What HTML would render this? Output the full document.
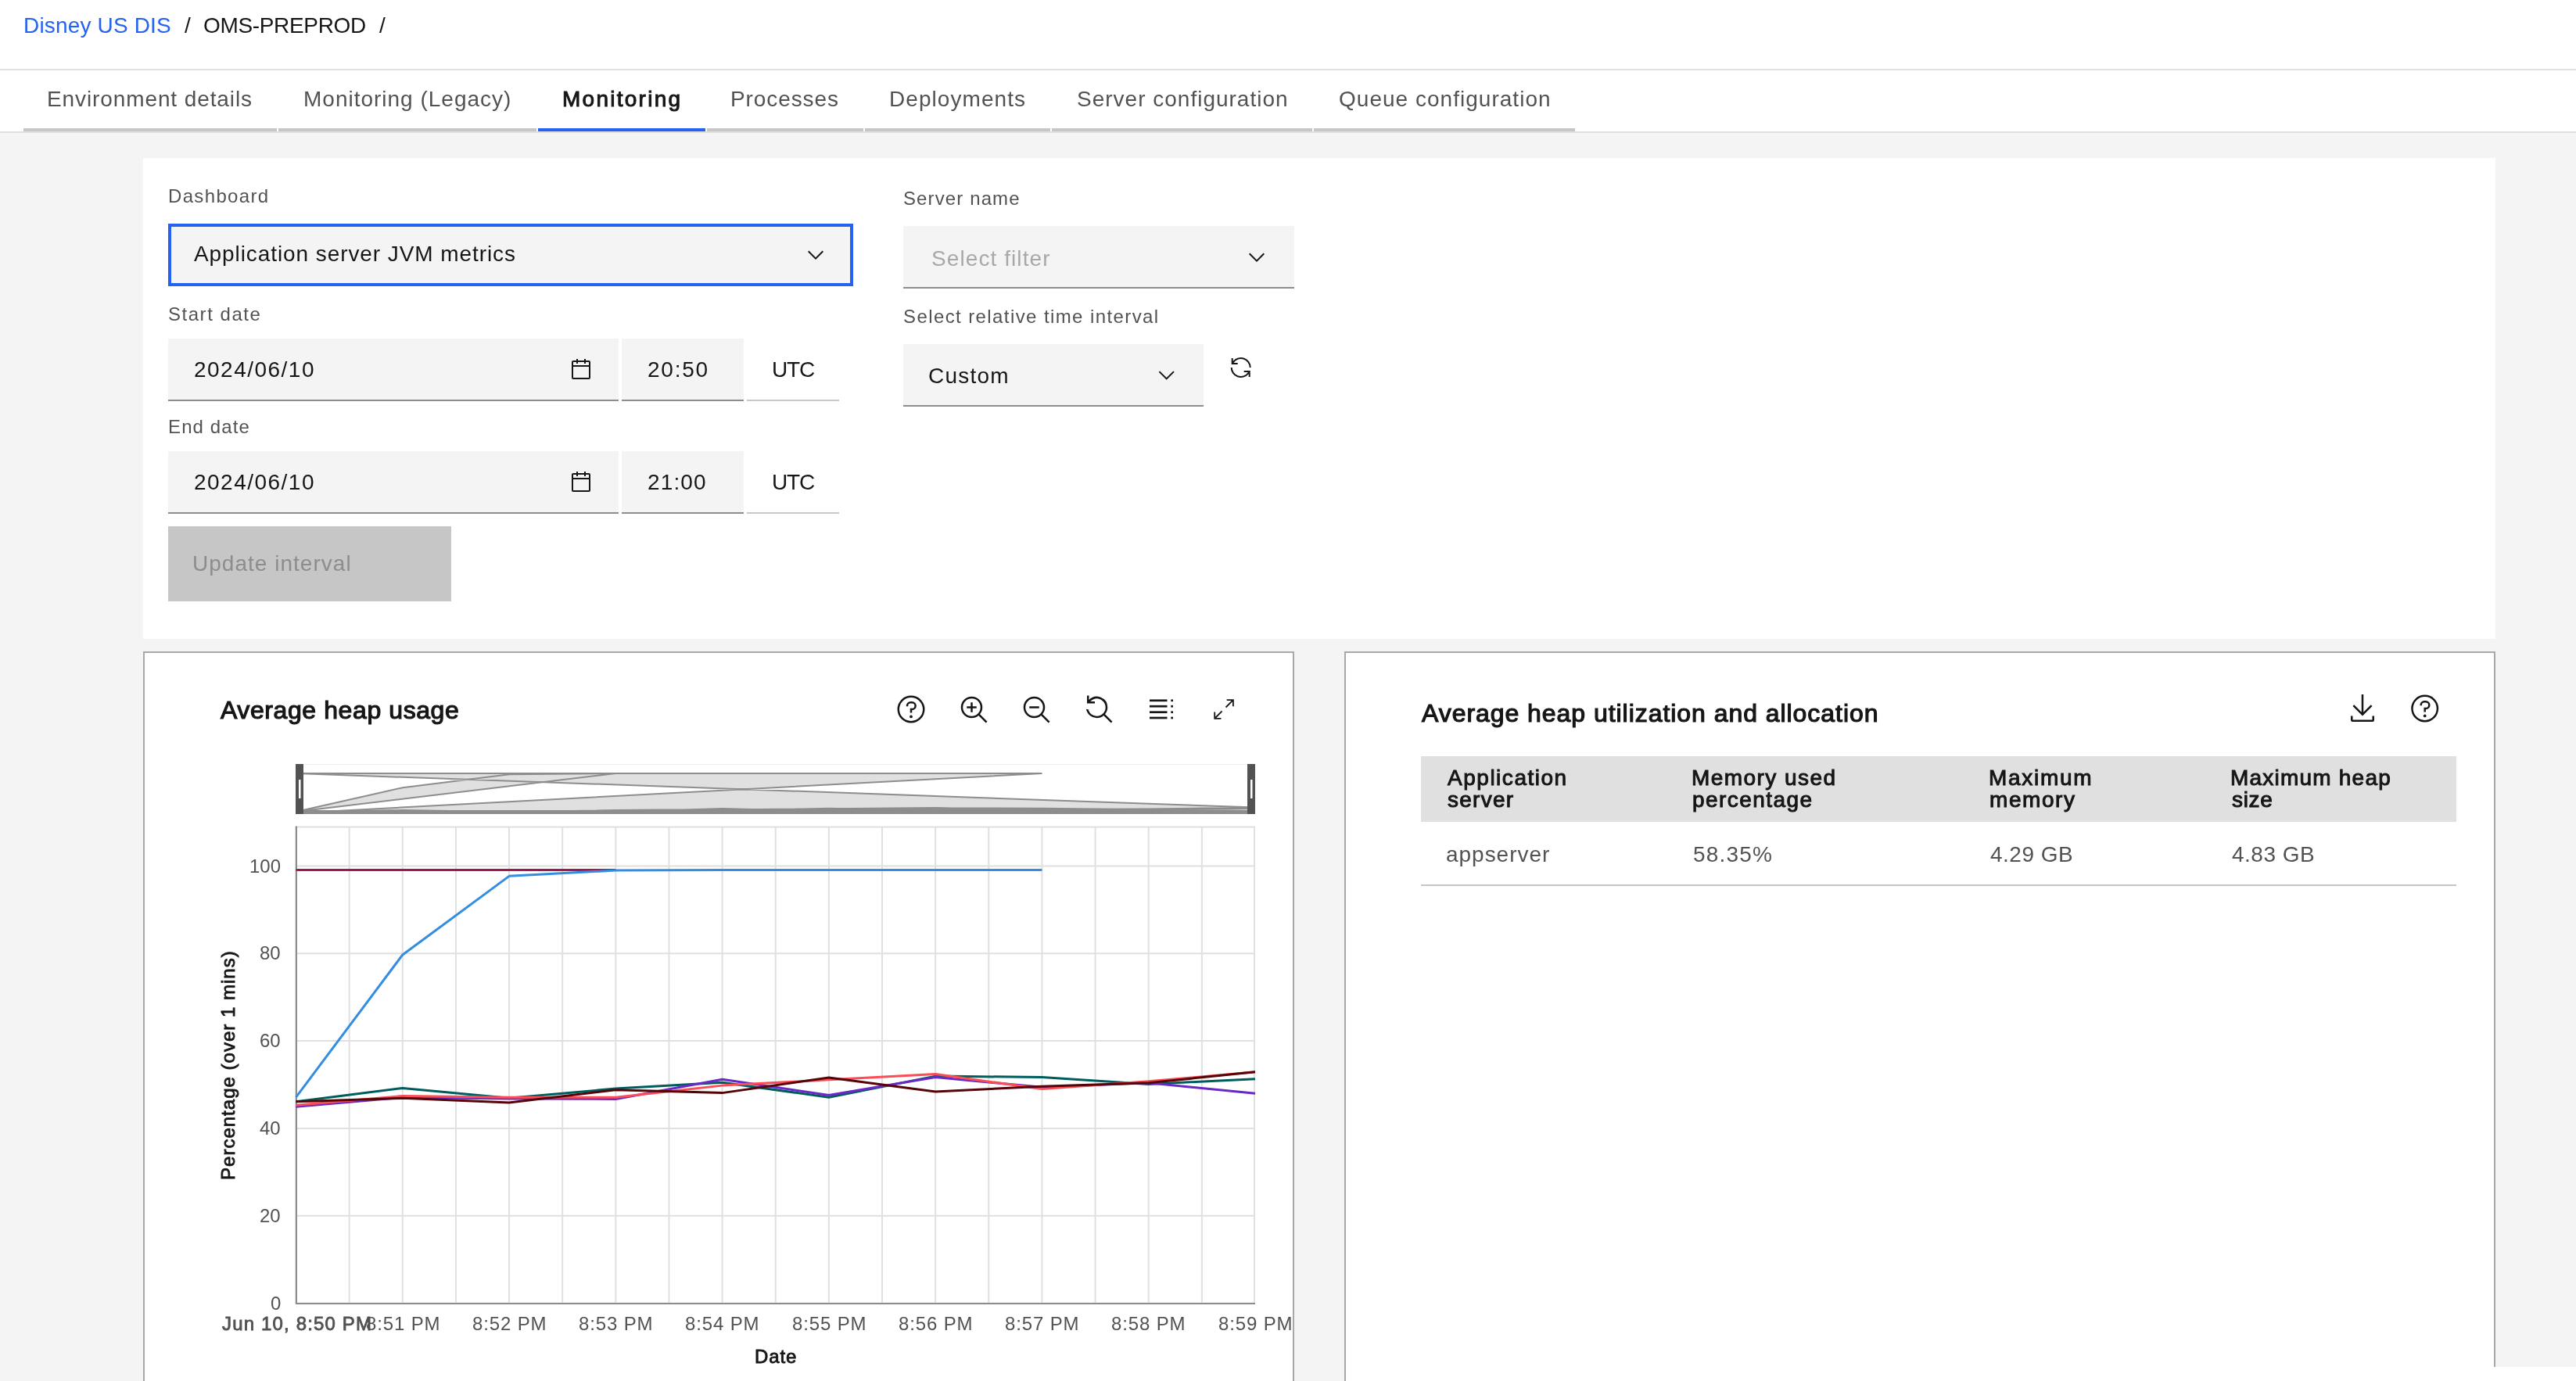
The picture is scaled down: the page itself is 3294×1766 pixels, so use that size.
<!DOCTYPE html>
<html><head><meta charset="utf-8">
<style>
html,body{margin:0;padding:0;}
body{width:3294px;height:1766px;overflow:hidden;position:relative;background:#f4f4f4;font-family:"Liberation Sans",sans-serif;}
.r{position:absolute;}
.t{position:absolute;white-space:nowrap;line-height:1;-webkit-font-smoothing:antialiased;will-change:transform;}
.ov{position:absolute;left:0;top:0;}
</style></head><body>
<div class="r" style="left:0px;top:0px;width:3294px;height:170px;background:#ffffff;"></div>
<div class="r" style="left:0px;top:88px;width:3294px;height:2px;background:#e0e0e0;"></div>
<div class="r" style="left:0px;top:168px;width:3294px;height:2px;background:#e0e0e0;"></div>
<div class="r" style="left:30px;top:164px;width:324px;height:4px;background:#c6c6c6;"></div>
<div class="r" style="left:356px;top:164px;width:330px;height:4px;background:#c6c6c6;"></div>
<div class="r" style="left:688px;top:164px;width:214px;height:4px;background:#2562f2;"></div>
<div class="r" style="left:904px;top:164px;width:200px;height:4px;background:#c6c6c6;"></div>
<div class="r" style="left:1106px;top:164px;width:237px;height:4px;background:#c6c6c6;"></div>
<div class="r" style="left:1345px;top:164px;width:333px;height:4px;background:#c6c6c6;"></div>
<div class="r" style="left:1680px;top:164px;width:334px;height:4px;background:#c6c6c6;"></div>
<div class="r" style="left:183px;top:202px;width:3008px;height:615px;background:#ffffff;"></div>
<div class="r" style="left:215px;top:286px;width:876px;height:80px;background:#f4f4f4;box-shadow:inset 0 0 0 4px #2562f2;"></div>
<div class="r" style="left:215px;top:433px;width:576px;height:80px;background:#f4f4f4;border-bottom:2px solid #8d8d8d;box-sizing:border-box;"></div>
<div class="r" style="left:795px;top:433px;width:156px;height:80px;background:#f4f4f4;border-bottom:2px solid #8d8d8d;box-sizing:border-box;"></div>
<div class="r" style="left:955px;top:511px;width:118px;height:2px;background:#c6c6c6;"></div>
<div class="r" style="left:215px;top:577px;width:576px;height:80px;background:#f4f4f4;border-bottom:2px solid #8d8d8d;box-sizing:border-box;"></div>
<div class="r" style="left:795px;top:577px;width:156px;height:80px;background:#f4f4f4;border-bottom:2px solid #8d8d8d;box-sizing:border-box;"></div>
<div class="r" style="left:955px;top:655px;width:118px;height:2px;background:#c6c6c6;"></div>
<div class="r" style="left:215px;top:673px;width:362px;height:96px;background:#c6c6c6;"></div>
<div class="r" style="left:1155px;top:289px;width:500px;height:80px;background:#f4f4f4;border-bottom:2px solid #8d8d8d;box-sizing:border-box;"></div>
<div class="r" style="left:1155px;top:440px;width:384px;height:80px;background:#f4f4f4;border-bottom:2px solid #8d8d8d;box-sizing:border-box;"></div>
<div class="r" style="left:183px;top:833px;width:1472px;height:967px;background:#ffffff;border:2px solid #a8a8a8;box-sizing:border-box;"></div>
<div class="r" style="left:1719px;top:833px;width:1472px;height:967px;background:#ffffff;border:2px solid #a8a8a8;box-sizing:border-box;"></div>
<div class="r" style="left:1817px;top:967px;width:1324px;height:84px;background:#e0e0e0;"></div>
<div class="r" style="left:1817px;top:1131px;width:1324px;height:2px;background:#c6c6c6;"></div>
<div class="r" style="left:3189px;top:1748px;width:105px;height:18px;background:#ffffff;"></div>
<svg class="ov" width="3294" height="1766" viewBox="0 0 3294 1766"><rect x="378" y="1057.5" width="1226" height="609" fill="none" stroke="#e0e0e0" stroke-width="2"/><line x1="446.64" y1="1057.5" x2="446.64" y2="1666.5" stroke="#e0e0e0" stroke-width="2"/><line x1="514.78" y1="1057.5" x2="514.78" y2="1666.5" stroke="#e0e0e0" stroke-width="2"/><line x1="582.92" y1="1057.5" x2="582.92" y2="1666.5" stroke="#e0e0e0" stroke-width="2"/><line x1="651.06" y1="1057.5" x2="651.06" y2="1666.5" stroke="#e0e0e0" stroke-width="2"/><line x1="719.19" y1="1057.5" x2="719.19" y2="1666.5" stroke="#e0e0e0" stroke-width="2"/><line x1="787.33" y1="1057.5" x2="787.33" y2="1666.5" stroke="#e0e0e0" stroke-width="2"/><line x1="855.47" y1="1057.5" x2="855.47" y2="1666.5" stroke="#e0e0e0" stroke-width="2"/><line x1="923.61" y1="1057.5" x2="923.61" y2="1666.5" stroke="#e0e0e0" stroke-width="2"/><line x1="991.75" y1="1057.5" x2="991.75" y2="1666.5" stroke="#e0e0e0" stroke-width="2"/><line x1="1059.89" y1="1057.5" x2="1059.89" y2="1666.5" stroke="#e0e0e0" stroke-width="2"/><line x1="1128.03" y1="1057.5" x2="1128.03" y2="1666.5" stroke="#e0e0e0" stroke-width="2"/><line x1="1196.17" y1="1057.5" x2="1196.17" y2="1666.5" stroke="#e0e0e0" stroke-width="2"/><line x1="1264.31" y1="1057.5" x2="1264.31" y2="1666.5" stroke="#e0e0e0" stroke-width="2"/><line x1="1332.44" y1="1057.5" x2="1332.44" y2="1666.5" stroke="#e0e0e0" stroke-width="2"/><line x1="1400.58" y1="1057.5" x2="1400.58" y2="1666.5" stroke="#e0e0e0" stroke-width="2"/><line x1="1468.72" y1="1057.5" x2="1468.72" y2="1666.5" stroke="#e0e0e0" stroke-width="2"/><line x1="1536.86" y1="1057.5" x2="1536.86" y2="1666.5" stroke="#e0e0e0" stroke-width="2"/><line x1="378" y1="1554.70" x2="1605" y2="1554.70" stroke="#e0e0e0" stroke-width="2"/><line x1="378" y1="1442.90" x2="1605" y2="1442.90" stroke="#e0e0e0" stroke-width="2"/><line x1="378" y1="1331.10" x2="1605" y2="1331.10" stroke="#e0e0e0" stroke-width="2"/><line x1="378" y1="1219.30" x2="1605" y2="1219.30" stroke="#e0e0e0" stroke-width="2"/><line x1="378" y1="1107.50" x2="1605" y2="1107.50" stroke="#e0e0e0" stroke-width="2"/><line x1="379" y1="1056.5" x2="379" y2="1668" stroke="#8d8d8d" stroke-width="2"/><line x1="378" y1="1667" x2="1605" y2="1667" stroke="#8d8d8d" stroke-width="2"/><polyline points="378.50,1112.53 514.78,1112.53 651.06,1112.53 787.33,1112.53" fill="none" stroke="#9f1853" stroke-width="3" stroke-linejoin="round"/><polyline points="378.50,1403.21 514.78,1220.98 651.06,1120.36 787.33,1113.09 923.61,1112.53 1059.89,1112.53 1196.17,1112.53 1332.44,1112.53" fill="none" stroke="#338de2" stroke-width="3" stroke-linejoin="round"/><polyline points="378.50,1408.80 514.78,1391.47 651.06,1404.33 787.33,1392.03 923.61,1384.20 1059.89,1403.21 1196.17,1376.10 1332.44,1377.50 1468.72,1386.44 1605.00,1379.73" fill="none" stroke="#005d5d" stroke-width="3" stroke-linejoin="round"/><polyline points="378.50,1415.23 514.78,1403.21 651.06,1404.89 787.33,1405.45 923.61,1380.29 1059.89,1400.42 1196.17,1377.50 1332.44,1390.35 1468.72,1384.76 1605.00,1398.18" fill="none" stroke="#6929c4" stroke-width="3" stroke-linejoin="round"/><polyline points="378.50,1413.27 514.78,1401.53 651.06,1403.21 787.33,1403.21 923.61,1388.12 1059.89,1380.85 1196.17,1373.58 1332.44,1392.59 1468.72,1382.81 1605.00,1370.79" fill="none" stroke="#fa4d56" stroke-width="3" stroke-linejoin="round"/><polyline points="378.50,1408.80 514.78,1404.33 651.06,1409.92 787.33,1393.71 923.61,1397.62 1059.89,1378.06 1196.17,1395.94 1332.44,1389.24 1468.72,1384.76 1605.00,1370.79" fill="none" stroke="#570408" stroke-width="3" stroke-linejoin="round"/><rect x="378" y="977" width="1227" height="64" fill="#ffffff"/><line x1="378" y1="977.5" x2="1605" y2="977.5" stroke="#f0f0f0" stroke-width="1"/><path d="M378.50,1040.00 L514.78,1037.98 L651.06,1038.26 L787.33,1038.35 L923.61,1034.11 L1059.89,1037.50 L1196.17,1033.64 L1332.44,1035.81 L1468.72,1034.87 L1605.00,1037.13 L378.50,1038.92 L514.78,1036.00 L651.06,1038.16 L787.33,1036.09 L923.61,1034.77 L1059.89,1037.98 L1196.17,1033.41 L1332.44,1033.64 L1468.72,1035.15 L1605.00,1034.02 L378.50,1038.92 L514.78,1038.16 L651.06,1039.11 L787.33,1036.37 L923.61,1037.03 L1059.89,1033.74 L1196.17,1036.75 L1332.44,1035.62 L1468.72,1034.87 L1605.00,1032.51 L378.50,989.00 L514.78,989.00 L651.06,989.00 L787.33,989.00 L378.50,1037.98 L514.78,1007.27 L651.06,990.32 L787.33,989.09 L923.61,989.00 L1059.89,989.00 L1196.17,989.00 L1332.44,989.00 L378.50,1039.67 L514.78,1037.69 L651.06,1037.98 L787.33,1037.98 L923.61,1035.43 L1059.89,1034.21 L1196.17,1032.98 L1332.44,1036.19 L1468.72,1034.54 L1605.00,1032.51 L1605.00,1040.00 L1468.72,1040.00 L1332.44,1040.00 L1196.17,1040.00 L1059.89,1040.00 L923.61,1040.00 L787.33,1040.00 L651.06,1040.00 L514.78,1040.00 L378.50,1040.00 L1332.44,1040.00 L1196.17,1040.00 L1059.89,1040.00 L923.61,1040.00 L787.33,1040.00 L651.06,1040.00 L514.78,1040.00 L378.50,1040.00 L787.33,1040.00 L651.06,1040.00 L514.78,1040.00 L378.50,1040.00 L1605.00,1040.00 L1468.72,1040.00 L1332.44,1040.00 L1196.17,1040.00 L1059.89,1040.00 L923.61,1040.00 L787.33,1040.00 L651.06,1040.00 L514.78,1040.00 L378.50,1040.00 L1605.00,1040.00 L1468.72,1040.00 L1332.44,1040.00 L1196.17,1040.00 L1059.89,1040.00 L923.61,1040.00 L787.33,1040.00 L651.06,1040.00 L514.78,1040.00 L378.50,1040.00 L1605.00,1040.00 L1468.72,1040.00 L1332.44,1040.00 L1196.17,1040.00 L1059.89,1040.00 L923.61,1040.00 L787.33,1040.00 L651.06,1040.00 L514.78,1040.00 L378.50,1040.00 Z" fill="#e0e0e0" fill-rule="nonzero"/><path d="M378.50,1040.00 L514.78,1037.98 L651.06,1038.26 L787.33,1038.35 L923.61,1034.11 L1059.89,1037.50 L1196.17,1033.64 L1332.44,1035.81 L1468.72,1034.87 L1605.00,1037.13 L378.50,1038.92 L514.78,1036.00 L651.06,1038.16 L787.33,1036.09 L923.61,1034.77 L1059.89,1037.98 L1196.17,1033.41 L1332.44,1033.64 L1468.72,1035.15 L1605.00,1034.02 L378.50,1038.92 L514.78,1038.16 L651.06,1039.11 L787.33,1036.37 L923.61,1037.03 L1059.89,1033.74 L1196.17,1036.75 L1332.44,1035.62 L1468.72,1034.87 L1605.00,1032.51 L378.50,989.00 L514.78,989.00 L651.06,989.00 L787.33,989.00 L378.50,1037.98 L514.78,1007.27 L651.06,990.32 L787.33,989.09 L923.61,989.00 L1059.89,989.00 L1196.17,989.00 L1332.44,989.00 L378.50,1039.67 L514.78,1037.69 L651.06,1037.98 L787.33,1037.98 L923.61,1035.43 L1059.89,1034.21 L1196.17,1032.98 L1332.44,1036.19 L1468.72,1034.54 L1605.00,1032.51" fill="none" stroke="#8d8d8d" stroke-width="2"/><rect x="378" y="1036" width="1227" height="5" fill="#8d8d8d"/><rect x="378" y="977" width="10" height="64" fill="#525252"/><rect x="382" y="997" width="2.5" height="24" fill="#ffffff"/><rect x="1595" y="977" width="10" height="64" fill="#525252"/><rect x="1599" y="997" width="2.5" height="24" fill="#ffffff"/><g transform="translate(1145,887) scale(1.25)" fill="#161616"><path d="M16,2A14,14,0,1,0,30,16,14,14,0,0,0,16,2Zm0,26A12,12,0,1,1,28,16,12,12,0,0,1,16,28Z"/><circle cx="16" cy="23.5" r="1.5"/><path d="M17,8H15.5A4.49,4.49,0,0,0,11,12.5V13h2v-.5A2.5,2.5,0,0,1,15.5,10H17a2.5,2.5,0,0,1,0,5H15v4.5h2V17a4.5,4.5,0,0,0,0-9Z"/></g><g transform="translate(1225,887) scale(1.25)" fill="#161616"><polygon points="19 13 15 13 15 9 13 9 13 13 9 13 9 15 13 15 13 19 15 19 15 15 19 15 19 13"/><path d="M22.45,21A10.87,10.87,0,0,0,25,14,11,11,0,1,0,14,25a10.87,10.87,0,0,0,7-2.55L28.59,30,30,28.59ZM14,23a9,9,0,1,1,9-9A9,9,0,0,1,14,23Z"/></g><g transform="translate(1305,887) scale(1.25)" fill="#161616"><rect x="9" y="13" width="10" height="2"/><path d="M22.45,21A10.87,10.87,0,0,0,25,14,11,11,0,1,0,14,25a10.87,10.87,0,0,0,7-2.55L28.59,30,30,28.59ZM14,23a9,9,0,1,1,9-9A9,9,0,0,1,14,23Z"/></g><g transform="translate(1385,887) scale(1.25)" fill="#161616"><path d="M22.4478,21A10.855,10.855,0,0,0,25,14,10.99,10.99,0,0,0,6,6.4658V2H4v8h8V8H7.332a8.9768,8.9768,0,1,1-2.1,8H3.1912A11.0118,11.0118,0,0,0,14,25a10.8046,10.8046,0,0,0,7-2.5522L28.5859,30,30,28.5859Z"/></g><rect x="1470" y="894.45" width="22.5" height="2.7" fill="#161616"/><rect x="1497.3" y="894.45" width="2.7" height="2.7" fill="#161616"/><rect x="1470" y="901.85" width="22.5" height="2.7" fill="#161616"/><rect x="1497.3" y="901.85" width="2.7" height="2.7" fill="#161616"/><rect x="1470" y="909.35" width="22.5" height="2.7" fill="#161616"/><rect x="1497.3" y="909.35" width="2.7" height="2.7" fill="#161616"/><rect x="1470" y="916.65" width="22.5" height="2.7" fill="#161616"/><rect x="1497.3" y="916.65" width="2.7" height="2.7" fill="#161616"/><g transform="translate(1550.5,892.4) scale(1.82)" fill="#161616"><path d="M10 1v1h3.3L9 6.3l.7.7L14 2.7V6h1V1zM7 9.7L6.3 9 2 13.3V10H1v5h5v-1H2.7z"/></g><g transform="translate(3001,885.5) scale(1.25)" fill="#161616"><path d="M26 24v4H6v-4H4v4a2 2 0 002 2h20a2 2 0 002-2v-4zM26 14l-1.41-1.41L17 20.17V2h-2v18.17l-7.59-7.58L6 14l10 10 10-10z"/></g><g transform="translate(3080.7,886) scale(1.25)" fill="#161616"><path d="M16,2A14,14,0,1,0,30,16,14,14,0,0,0,16,2Zm0,26A12,12,0,1,1,28,16,12,12,0,0,1,16,28Z"/><circle cx="16" cy="23.5" r="1.5"/><path d="M17,8H15.5A4.49,4.49,0,0,0,11,12.5V13h2v-.5A2.5,2.5,0,0,1,15.5,10H17a2.5,2.5,0,0,1,0,5H15v4.5h2V17a4.5,4.5,0,0,0,0-9Z"/></g><g transform="translate(727,457) scale(2)" fill="#161616"><path d="M13,2H11V1H10V2H6V1H5V2H3A1,1,0,0,0,2,3V13a1,1,0,0,0,1,1H13a1,1,0,0,0,1-1V3A1,1,0,0,0,13,2Zm0,11H3V6H13Zm0-8H3V3H5V4H6V3h4V4h1V3h2Z"/></g><g transform="translate(727,601) scale(2)" fill="#161616"><path d="M13,2H11V1H10V2H6V1H5V2H3A1,1,0,0,0,2,3V13a1,1,0,0,0,1,1H13a1,1,0,0,0,1-1V3A1,1,0,0,0,13,2Zm0,11H3V6H13Zm0-8H3V3H5V4H6V3h4V4h1V3h2Z"/></g><g transform="translate(1027,310) scale(2)" fill="#161616"><path d="M8 11L3 6 3.7 5.3 8 9.6 12.3 5.3 13 6z"/></g><g transform="translate(1591,313) scale(2)" fill="#161616"><path d="M8 11L3 6 3.7 5.3 8 9.6 12.3 5.3 13 6z"/></g><g transform="translate(1475.7,463.8) scale(2)" fill="#161616"><path d="M8 11L3 6 3.7 5.3 8 9.6 12.3 5.3 13 6z"/></g><g transform="translate(1570.7,454) scale(1)" fill="#161616"><path d="M12,10H6.78A11,11,0,0,1,27,16h2A13,13,0,0,0,6,7.68V4H4v8h8Z"/><path d="M20,22h5.22A11,11,0,0,1,5,16H3a13,13,0,0,0,23,8.32V28h2V20H20Z"/></g></svg>
<span class="t" style="left:29.50px;top:18.50px;font-size:28px;color:#2562f2;letter-spacing:0.163px;">Disney US DIS</span>
<span class="t" style="left:236.00px;top:18.50px;font-size:28px;color:#161616;">/</span>
<span class="t" style="left:259.50px;top:18.50px;font-size:28px;color:#161616;letter-spacing:-0.335px;">OMS-PREPROD</span>
<span class="t" style="left:484.60px;top:18.50px;font-size:28px;color:#161616;">/</span>
<span class="t" style="left:60.30px;top:113.00px;font-size:28px;color:#525252;letter-spacing:0.894px;">Environment details</span>
<span class="t" style="left:387.70px;top:113.00px;font-size:28px;color:#525252;letter-spacing:0.993px;">Monitoring (Legacy)</span>
<span class="t" style="left:719.00px;top:113.00px;font-size:28px;color:#161616;-webkit-text-stroke:1.00px #161616;letter-spacing:2.260px;">Monitoring</span>
<span class="t" style="left:934.00px;top:113.00px;font-size:28px;color:#525252;letter-spacing:0.910px;">Processes</span>
<span class="t" style="left:1136.80px;top:113.00px;font-size:28px;color:#525252;letter-spacing:1.059px;">Deployments</span>
<span class="t" style="left:1376.90px;top:113.00px;font-size:28px;color:#525252;letter-spacing:1.000px;">Server configuration</span>
<span class="t" style="left:1712.00px;top:113.00px;font-size:28px;color:#525252;letter-spacing:1.022px;">Queue configuration</span>
<span class="t" style="left:215.30px;top:238.78px;font-size:24px;color:#525252;letter-spacing:1.342px;">Dashboard</span>
<span class="t" style="left:215.30px;top:389.98px;font-size:24px;color:#525252;letter-spacing:1.532px;">Start date</span>
<span class="t" style="left:215.30px;top:533.88px;font-size:24px;color:#525252;letter-spacing:1.124px;">End date</span>
<span class="t" style="left:1154.60px;top:242.08px;font-size:24px;color:#525252;letter-spacing:1.116px;">Server name</span>
<span class="t" style="left:1154.60px;top:392.98px;font-size:24px;color:#525252;letter-spacing:1.405px;">Select relative time interval</span>
<span class="t" style="left:248.30px;top:311.10px;font-size:28px;color:#161616;letter-spacing:0.920px;">Application server JVM metrics</span>
<span class="t" style="left:247.90px;top:459.40px;font-size:28px;color:#161616;letter-spacing:1.482px;">2024/06/10</span>
<span class="t" style="left:827.60px;top:459.20px;font-size:28px;color:#161616;letter-spacing:1.776px;">20:50</span>
<span class="t" style="left:986.50px;top:459.30px;font-size:28px;color:#161616;letter-spacing:-1.162px;">UTC</span>
<span class="t" style="left:247.90px;top:603.40px;font-size:28px;color:#161616;letter-spacing:1.482px;">2024/06/10</span>
<span class="t" style="left:827.60px;top:603.30px;font-size:28px;color:#161616;letter-spacing:1.126px;">21:00</span>
<span class="t" style="left:986.50px;top:603.30px;font-size:28px;color:#161616;letter-spacing:-1.162px;">UTC</span>
<span class="t" style="left:245.90px;top:707.40px;font-size:28px;color:#8d8d8d;letter-spacing:1.021px;">Update interval</span>
<span class="t" style="left:1190.70px;top:317.00px;font-size:28px;color:#a8a8a8;letter-spacing:1.086px;">Select filter</span>
<span class="t" style="left:1187.20px;top:466.50px;font-size:28px;color:#161616;letter-spacing:1.211px;">Custom</span>
<span class="t" style="left:282.20px;top:891.81px;font-size:32px;color:#161616;-webkit-text-stroke:1.20px #161616;letter-spacing:0.590px;">Average heap usage</span>
<span class="t" style="left:345.50px;top:1654.68px;font-size:24px;color:#525252;">0</span>
<span class="t" style="left:332.15px;top:1542.88px;font-size:24px;color:#525252;">20</span>
<span class="t" style="left:332.15px;top:1431.08px;font-size:24px;color:#525252;">40</span>
<span class="t" style="left:332.15px;top:1319.28px;font-size:24px;color:#525252;">60</span>
<span class="t" style="left:332.15px;top:1207.48px;font-size:24px;color:#525252;">80</span>
<span class="t" style="left:318.80px;top:1095.68px;font-size:24px;color:#525252;">100</span>
<span class="t" style="left:283.50px;top:1681.48px;font-size:24px;color:#525252;-webkit-text-stroke:0.85px #525252;letter-spacing:1.158px;">Jun 10, 8:50 PM</span>
<span class="t" style="left:467.53px;top:1681.48px;font-size:24px;color:#525252;letter-spacing:0.852px;">8:51 PM</span>
<span class="t" style="left:603.81px;top:1681.48px;font-size:24px;color:#525252;letter-spacing:0.852px;">8:52 PM</span>
<span class="t" style="left:740.08px;top:1681.48px;font-size:24px;color:#525252;letter-spacing:0.852px;">8:53 PM</span>
<span class="t" style="left:876.36px;top:1681.48px;font-size:24px;color:#525252;letter-spacing:0.852px;">8:54 PM</span>
<span class="t" style="left:1012.64px;top:1681.48px;font-size:24px;color:#525252;letter-spacing:0.852px;">8:55 PM</span>
<span class="t" style="left:1148.92px;top:1681.48px;font-size:24px;color:#525252;letter-spacing:0.852px;">8:56 PM</span>
<span class="t" style="left:1285.19px;top:1681.48px;font-size:24px;color:#525252;letter-spacing:0.852px;">8:57 PM</span>
<span class="t" style="left:1421.47px;top:1681.48px;font-size:24px;color:#525252;letter-spacing:0.852px;">8:58 PM</span>
<span class="t" style="left:1557.75px;top:1681.48px;font-size:24px;color:#525252;letter-spacing:0.852px;">8:59 PM</span>
<span class="t" style="left:965.10px;top:1722.58px;font-size:24px;color:#161616;-webkit-text-stroke:0.85px #161616;letter-spacing:0.884px;">Date</span>
<span class="t" style="left:1818.30px;top:896.21px;font-size:32px;color:#161616;-webkit-text-stroke:1.20px #161616;letter-spacing:0.951px;">Average heap utilization and allocation</span>
<span class="t" style="left:1850.50px;top:981.40px;font-size:28px;color:#161616;-webkit-text-stroke:1.00px #161616;letter-spacing:1.519px;">Application</span>
<span class="t" style="left:1850.50px;top:1008.90px;font-size:28px;color:#161616;-webkit-text-stroke:1.00px #161616;letter-spacing:1.266px;">server</span>
<span class="t" style="left:2163.30px;top:981.40px;font-size:28px;color:#161616;-webkit-text-stroke:1.00px #161616;letter-spacing:1.446px;">Memory used</span>
<span class="t" style="left:2164.30px;top:1008.90px;font-size:28px;color:#161616;-webkit-text-stroke:1.00px #161616;letter-spacing:1.451px;">percentage</span>
<span class="t" style="left:2542.70px;top:981.40px;font-size:28px;color:#161616;-webkit-text-stroke:1.00px #161616;letter-spacing:1.698px;">Maximum</span>
<span class="t" style="left:2543.70px;top:1008.90px;font-size:28px;color:#161616;-webkit-text-stroke:1.00px #161616;letter-spacing:1.557px;">memory</span>
<span class="t" style="left:2852.00px;top:981.40px;font-size:28px;color:#161616;-webkit-text-stroke:1.00px #161616;letter-spacing:1.215px;">Maximum heap</span>
<span class="t" style="left:2854.00px;top:1008.90px;font-size:28px;color:#161616;-webkit-text-stroke:1.00px #161616;letter-spacing:0.693px;">size</span>
<span class="t" style="left:1848.60px;top:1079.20px;font-size:28px;color:#525252;letter-spacing:0.977px;">appserver</span>
<span class="t" style="left:2165.40px;top:1079.20px;font-size:28px;color:#525252;letter-spacing:1.186px;">58.35%</span>
<span class="t" style="left:2544.70px;top:1079.20px;font-size:28px;color:#525252;letter-spacing:0.491px;">4.29 GB</span>
<span class="t" style="left:2854.00px;top:1079.20px;font-size:28px;color:#525252;letter-spacing:0.491px;">4.83 GB</span>
<div class="t" style="left:279.58px;top:1508.90px;font-size:24px;-webkit-text-stroke:0.85px #161616;color:#161616;transform-origin:0 0;transform:rotate(-90deg);letter-spacing:1.011px;">Percentage (over 1 mins)</div>
</body></html>
